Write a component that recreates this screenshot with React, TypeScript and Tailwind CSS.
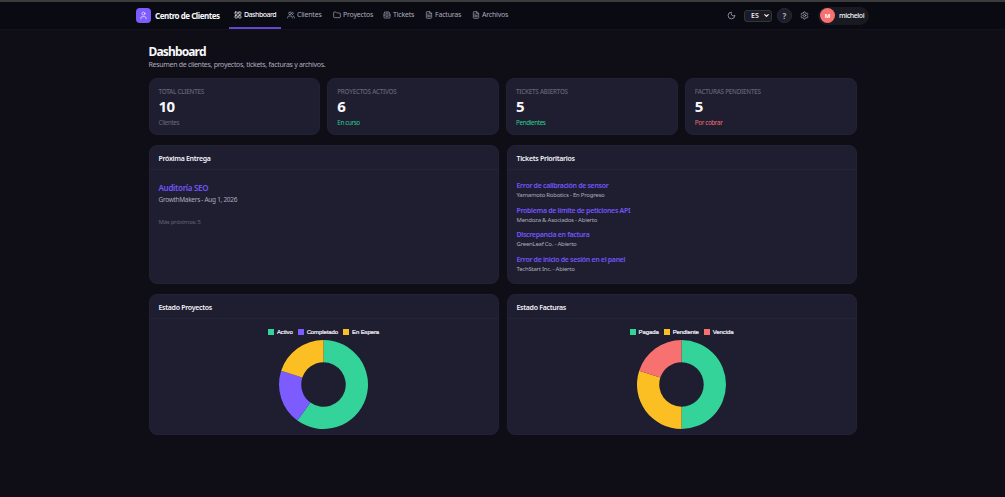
import React from "react";
import { User, LayoutGrid, Users, Folder, FileText, Moon, Settings, ChevronDown } from "lucide-react";

const nav = [
  { label: "Clientes", Icon: Users, cls: "w-[46px]" },
  { label: "Proyectos", Icon: Folder, cls: "w-[50px]" },
  { label: "Tickets", Icon: TicketIcon, cls: "w-[42px]" },
  { label: "Facturas", Icon: FileText, cls: "w-[47px]" },
  { label: "Archivos", Icon: FileText, cls: "w-[47px]" },
];

function TicketIcon({ size = 8 }: { size?: number }) {
  return (
    <svg width={size} height={size} viewBox="0 0 24 24" fill="none" stroke="currentColor" strokeWidth="2" strokeLinejoin="round" strokeLinecap="round">
      <path d="M6 3h12l3 7v9a2 2 0 0 1-2 2H5a2 2 0 0 1-2-2v-9z" />
      <path d="M3 12h18M9 7h6M9 16h6" />
    </svg>
  );
}

const stats = [
  { title: "TOTAL CLIENTES", value: "10", note: "Clientes", color: "text-[#6a687e]" },
  { title: "PROYECTOS ACTIVOS", value: "6", note: "En curso", color: "text-[#2fcb91]" },
  { title: "TICKETS ABIERTOS", value: "5", note: "Pendientes", color: "text-[#2fcb91]" },
  { title: "FACTURAS PENDIENTES", value: "5", note: "Por cobrar", color: "text-[#f06b6e]" },
];

const tickets = [
  ["Error de calibración de sensor", "Yamamoto Robotics - En Progreso"],
  ["Problema de límite de peticiones API", "Mendoza & Asociados - Abierto"],
  ["Discrepancia en factura", "GreenLeaf Co. - Abierto"],
  ["Error de inicio de sesión en el panel", "TechStart Inc. - Abierto"],
];

type Slice = { label: string; value: number; color: string };

const projects: Slice[] = [
  { label: "Activo", value: 60, color: "#34d399" },
  { label: "Completado", value: 20, color: "#7c5cff" },
  { label: "En Espera", value: 20, color: "#fbbf24" },
];
const invoices: Slice[] = [
  { label: "Pagada", value: 50, color: "#34d399" },
  { label: "Pendiente", value: 30, color: "#fbbf24" },
  { label: "Vencida", value: 20, color: "#f87171" },
];

function Panel({ title, className, children }: { title: string; className: string; children: React.ReactNode }) {
  return (
    <section className={`flex flex-col rounded-[8px] border border-[#232235] bg-[#1e1e30] ${className}`}>
      <h2 className="flex h-[24px] shrink-0 items-center border-b border-[#242438] px-[9px] pt-[2px] text-[7px] font-semibold tracking-[-0.3px] text-[#f3f2fa]">{title}</h2>
      {children}
    </section>
  );
}

function Donut({ data }: { data: Slice[] }) {
  const at = (r: number, v: number) => {
    const a = (v / 100) * Math.PI * 2;
    return `${50 + r * Math.sin(a)} ${50 - r * Math.cos(a)}`;
  };
  let start = 0;
  return (
    <div className="flex flex-col items-center pt-[9px]">
      <div className="flex h-[7px] items-center gap-[5px] font-['Liberation_Sans',sans-serif] text-[6px] tracking-[-0.1px] text-[#f3f2fa] [-webkit-text-stroke:0.2px]">
        {data.map((d) => (
          <span key={d.label} className="flex items-center gap-[2.5px]">
            <i className="h-[6px] w-[6.5px]" style={{ backgroundColor: d.color }} />
            {d.label}
          </span>
        ))}
      </div>
      <svg className="mt-[4.5px] size-[89px]" viewBox="0 0 100 100">
        {data.map((d) => {
          const end = start + d.value;
          const big = d.value > 50 ? 1 : 0;
          const path = `M${at(50, start)}A50 50 0 ${big} 1 ${at(50, end)}L${at(25, end)}A25 25 0 ${big} 0 ${at(25, start)}Z`;
          start = end;
          return <path key={d.label} d={path} fill={d.color} />;
        })}
      </svg>
    </div>
  );
}

export default function App() {
  return (
    <div className="h-[497px] w-[1005px] overflow-hidden border-t-2 border-[#3b3b3b] bg-[#0f0e17] font-['Noto_Sans','Open_Sans',sans-serif] text-[7px] leading-none text-[#acabbc]">
      <header className="flex h-[28px] items-center border-b border-[#14131d] bg-[#0a0a12] pl-[136px] pr-[136px]">
        <span className="flex size-[15px] items-center justify-center rounded-[4px] bg-[#7c5cff] text-[#e9e4ff]">
          <User size={9} strokeWidth={2} />
        </span>
        <b className="ml-[4px] w-[70px] whitespace-nowrap text-[8px] font-bold tracking-[-0.48px] text-[#f8f8fc]">Centro de Clientes</b>
        <nav className="ml-[4px] flex h-full items-center tracking-[-0.2px]">
          <a className="flex h-full w-[52px] items-center gap-[2px] border-b-2 border-[#6248cc] pl-[5px] font-medium tracking-[-0.5px] text-[#f8f8fc]">
            <LayoutGrid size={8} />
            Dashboard
          </a>
          {nav.map(({ label, Icon, cls }) => (
            <a key={label} className={`flex h-full items-center gap-[2px] border-b-2 border-transparent pl-[6px] ${cls}`}>
              <Icon size={8} />
              {label}
            </a>
          ))}
        </nav>
        <div className="ml-auto flex items-center">
          <Moon size={9} />
          <span className="ml-[8px] flex h-[12px] w-[28px] items-center justify-between rounded-[3px] border border-[#34343e] bg-[#1b1b24] pl-[6px] pr-[1px] font-semibold text-[#f0eff8]">
            ES
            <ChevronDown size={7} strokeWidth={4} />
          </span>
          <span className="ml-[5px] flex size-[15px] items-center justify-center rounded-full border border-[#2c2c37] bg-[#1e1e28] text-[8px] font-bold">?</span>
          <Settings size={9} className="ml-[8px]" />
          <span className="ml-[9px] flex h-[18px] w-[51px] items-center gap-[4px] rounded-full bg-[#191922] pl-[2px] font-medium tracking-[-0.4px] text-[#f8f8fc]">
            <span className="flex size-[15px] items-center justify-center rounded-full bg-[#f87171] text-[6px] font-bold tracking-normal text-white">M</span>
            micheloi
          </span>
        </div>
      </header>
      <main className="ml-[148.5px] w-[708px] pt-[13px]">
        <h1 className="h-[15px] text-[12px] font-bold leading-[17px] tracking-[-0.85px] text-[#f8f8fc]">Dashboard</h1>
        <p className="h-[10px] leading-[13px] tracking-[-0.3px]">Resumen de clientes, proyectos, tickets, facturas y archivos.</p>
        <div className="mt-[10px] grid grid-cols-4 gap-[7px]">
          {stats.map((s) => (
            <section key={s.title} className="h-[57px] rounded-[8px] border border-[#232235] bg-[#1e1e30] px-[9px] pt-[9px]">
              <h3 className="text-[6.3px] font-medium leading-[7px] tracking-[-0.24px] text-[#656379]">{s.title}</h3>
              <strong className="mt-px block text-[15px] font-bold leading-[20px] tracking-[-0.6px] text-[#f8f8fc]">{s.value}</strong>
              <p className={`mt-[3px] text-[6.3px] leading-[7px] tracking-[-0.35px] ${s.color}`}>{s.note}</p>
            </section>
          ))}
        </div>
        <div className="mt-[10px] grid grid-cols-2 gap-x-[8px] gap-y-[10px]">
          <Panel title="Próxima Entrega" className="h-[139px]">
            <div className="px-[9px] pt-[12.5px]">
              <h3 className="text-[8px] font-semibold leading-[10px] tracking-[-0.3px] text-[#7455fa]">Auditoría SEO</h3>
              <p className="mt-[2px] text-[6.5px] leading-[9px] tracking-[-0.3px]">GrowthMakers - Aug 1, 2026</p>
              <p className="mt-[14px] text-[6px] leading-[8px] tracking-[-0.27px] text-[#656379]">Más próximos: 5</p>
            </div>
          </Panel>
          <Panel title="Tickets Prioritarios" className="h-[139px]">
            <ul className="px-[9px] pt-[11px]">
              {tickets.map(([title, info]) => (
                <li key={title} className="h-[24.6px]">
                  <h3 className="text-[7px] font-semibold leading-[10px] tracking-[-0.32px] text-[#7455fa]">{title}</h3>
                  <p className="text-[6px] leading-[9px] tracking-[-0.24px]">{info}</p>
                </li>
              ))}
            </ul>
          </Panel>
          <Panel title="Estado Proyectos" className="h-[141px]"><Donut data={projects} /></Panel>
          <Panel title="Estado Facturas" className="h-[141px]"><Donut data={invoices} /></Panel>
        </div>
      </main>
    </div>
  );
}
